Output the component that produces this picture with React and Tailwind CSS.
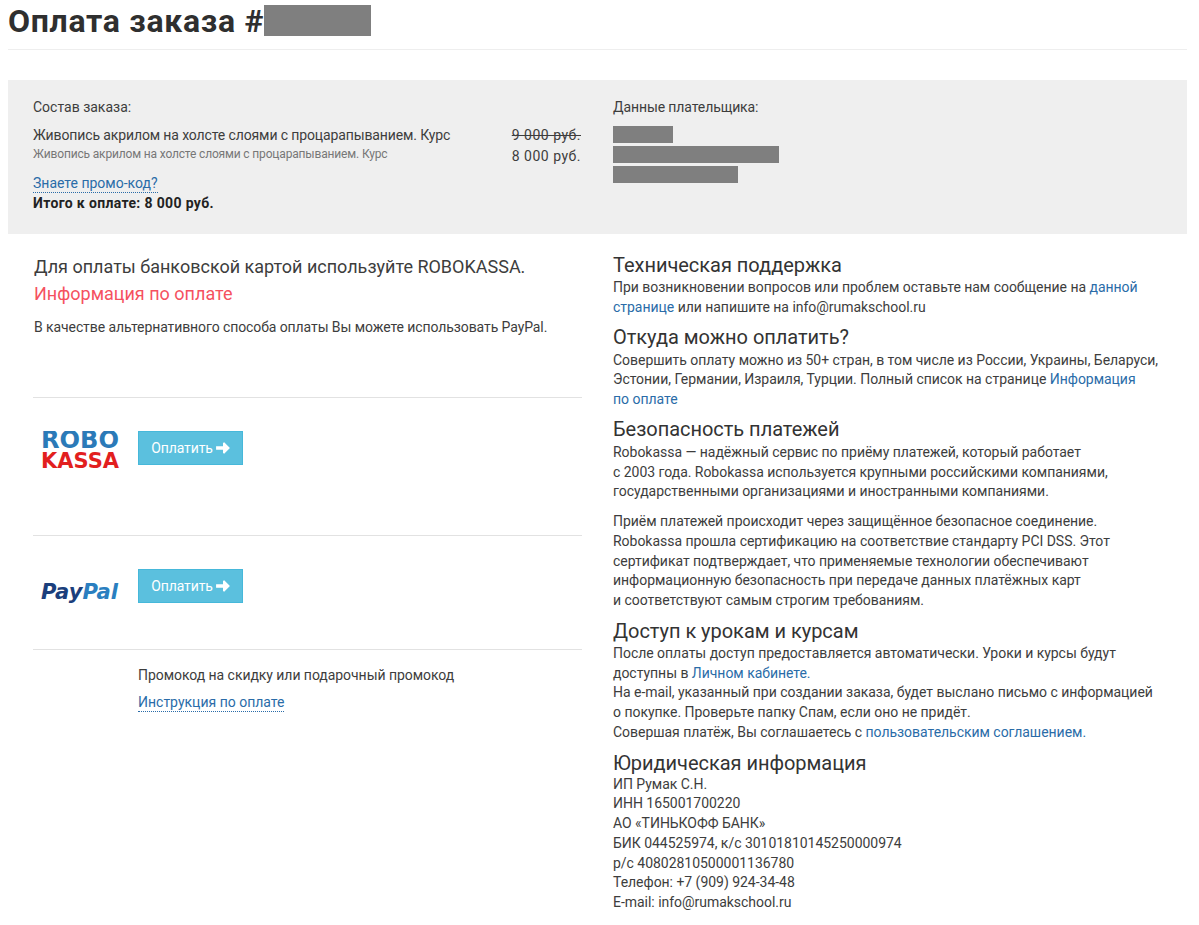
const link = "text-[#2a6ca8]"

function Redacted({ className }) {
  return <div className={`bg-[#7f7f7f] ${className}`} />
}

function Heading({ children }) {
  return <h3 className="text-[20px] leading-[22px] text-[#333]">{children}</h3>
}

function PayRow({ logo, className }) {
  return (
    <div className={`flex items-start pt-[33px] border-b border-[#e2e2e2] ${className}`}>
      <div className="w-[105px] pl-[8px]">{logo}</div>
      <button className="flex items-center justify-center gap-[3px] w-[105px] h-[34px] bg-[#5bc0de] border border-[#46b8da] text-white text-[14px] tracking-[-0.1px]">
        Оплатить
        <svg width="14" height="12" viewBox="0 0 15 13" fill="#fff">
          <path d="M0 4.5h7.5V1.2L8.8.4 15 6.5l-6.2 6.1-1.3-.8V8.5H0z" />
        </svg>
      </button>
    </div>
  )
}

function RoboLogo() {
  return (
    <svg width="90" height="42" viewBox="0 0 90 42" className="block">
      <text x="0" y="17" fontFamily="DejaVu Sans" fontWeight="700" fontSize="25" textLength="78" lengthAdjust="spacingAndGlyphs" fill="#2b7ab8">ROBO</text>
      <text x="0" y="37" fontFamily="DejaVu Sans" fontWeight="700" fontSize="21" textLength="78" lengthAdjust="spacingAndGlyphs" fill="#e21f1f">KASSA</text>
    </svg>
  )
}

function PaypalLogo() {
  return (
    <svg width="90" height="30" viewBox="0 0 90 30" className="block mt-[9px]">
      <text x="0" y="21" fontFamily="DejaVu Sans" fontWeight="700" fontStyle="italic" fontSize="21" textLength="77" lengthAdjust="spacingAndGlyphs">
        <tspan fill="#1b3f7c">Pay</tspan>
        <tspan fill="#2a7fc0">Pal</tspan>
      </text>
    </svg>
  )
}

export default function App() {
  return (
    <div className="min-h-[925px] bg-white pl-[8px] pr-[12px] font-['Roboto','Noto_Sans',sans-serif] text-[14px] text-[#3d3d3d]">
      <div className="flex items-center h-[50px] pb-[8px] border-b border-[#eee]">
        <h1 className="text-[32px] leading-[40px] font-bold text-[#2f2f2f] tracking-[0.7px]">Оплата заказа #</h1>
        <Redacted className="w-[107px] h-[31px]" />
      </div>

      <div className="mt-[30px] h-[154px] bg-[#efefef] flex pl-[25px] pt-[17px]">
        <div className="w-[548px]">
          <div className="leading-[20px]">Состав заказа:</div>
          <div className="flex justify-between mt-[8px]">
            <div>
              <div className="leading-[20px] tracking-[-0.12px]">Живопись акрилом на холсте слоями с процарапыванием. Курс</div>
              <div className="text-[12px] leading-[18px] tracking-[-0.16px] text-[#777]">Живопись акрилом на холсте слоями с процарапыванием. Курс</div>
            </div>
            <div className="text-right tracking-[0.5px]">
              <div className="leading-[20px] line-through">9 000 руб.</div>
              <div className="mt-[1px] leading-[20px]">8 000 руб.</div>
            </div>
          </div>
          <a className={`inline-block mt-[9px] leading-[17px] border-b border-dotted border-[#2a6ca8] ${link}`}>Знаете промо-код?</a>
          <div className="-mt-[1px] font-bold leading-[20px] tracking-[0.35px] text-[#222]">Итого к оплате: 8 000 руб.</div>
        </div>
        <div className="ml-[32px]">
          <div className="leading-[20px] tracking-[-0.1px]">Данные плательщика:</div>
          <div className="mt-[9px] flex flex-col gap-[3px]">
            <Redacted className="w-[60px] h-[17px]" />
            <Redacted className="w-[166px] h-[17px]" />
            <Redacted className="w-[125px] h-[17px]" />
          </div>
        </div>
      </div>

      <div className="flex pl-[25px] pt-[20px]">
        <div className="w-[549px] -mt-[1px]">
          <p className="pl-[1px] text-[18px] leading-[27px]">Для оплаты банковской картой используйте ROBOKASSA.</p>
          <p className="pl-[1px] text-[18px] leading-[27px] text-[#f5515f]">Информация по оплате</p>
          <p className="pl-[1px] mt-[10px] leading-[20px] tracking-[-0.09px]">В качестве альтернативного способа оплаты Вы можете использовать PayPal.</p>
          <div className="mt-[60px] border-t border-[#e2e2e2]">
            <PayRow logo={<RoboLogo />} className="h-[138px]" />
            <PayRow logo={<PaypalLogo />} className="h-[114px]" />
          </div>
          <div className="pl-[105px] mt-[15px]">
            <p className="leading-[20px] tracking-[-0.05px]">Промокод на скидку или подарочный промокод</p>
            <a className={`inline-block mt-[8px] leading-[18px] border-b border-dotted border-[#2a6ca8] ${link}`}>Инструкция по оплате</a>
          </div>
        </div>

        <div className="ml-[31px] w-[550px] leading-[19.75px] tracking-[-0.03px]">
          <Heading>Техническая поддержка</Heading>
          <p className="mt-[2px]">При возникновении вопросов или проблем оставьте нам сообщение на <a className={link}>данной<br />странице</a> или напишите на info@rumakschool.ru</p>
          <div className="mt-[8px]"><Heading>Откуда можно оплатить?</Heading></div>
          <p className="mt-[3px]">Совершить оплату можно из 50+ стран, в том числе из России, Украины, Беларуси,<br />Эстонии, Германии, Израиля, Турции. Полный список на странице <a className={link}>Информация<br />по оплате</a></p>
          <div className="mt-[8px]"><Heading>Безопасность платежей</Heading></div>
          <p className="mt-[3px]">Robokassa — надёжный сервис по приёму платежей, который работает<br />с 2003 года. Robokassa используется крупными российскими компаниями,<br />государственными организациями и иностранными компаниями.</p>
          <p className="mt-[10px]">Приём платежей происходит через защищённое безопасное соединение.<br />Robokassa прошла сертификацию на соответствие стандарту PCI DSS. Этот<br />сертификат подтверждает, что применяемые технологии обеспечивают<br />информационную безопасность при передаче данных платёжных карт<br />и соответствуют самым строгим требованиям.</p>
          <div className="mt-[9px]"><Heading>Доступ к урокам и курсам</Heading></div>
          <p className="mt-[2px]">После оплаты доступ предоставляется автоматически. Уроки и курсы будут<br />доступны в <a className={link}>Личном кабинете.</a><br />На e-mail, указанный при создании заказа, будет выслано письмо с информацией<br />о покупке. Проверьте папку Спам, если оно не придёт.<br />Совершая платёж, Вы соглашаетесь с <a className={link}>пользовательским соглашением.</a></p>
          <div className="mt-[9px]"><Heading>Юридическая информация</Heading></div>
          <p className="mt-[1px]">ИП Румак С.Н.<br />ИНН 165001700220<br />АО «ТИНЬКОФФ БАНК»<br />БИК 044525974, к/с 30101810145250000974<br />р/с 40802810500001136780<br />Телефон: +7 (909) 924-34-48<br />E-mail: info@rumakschool.ru</p>
        </div>
      </div>
    </div>
  )
}
